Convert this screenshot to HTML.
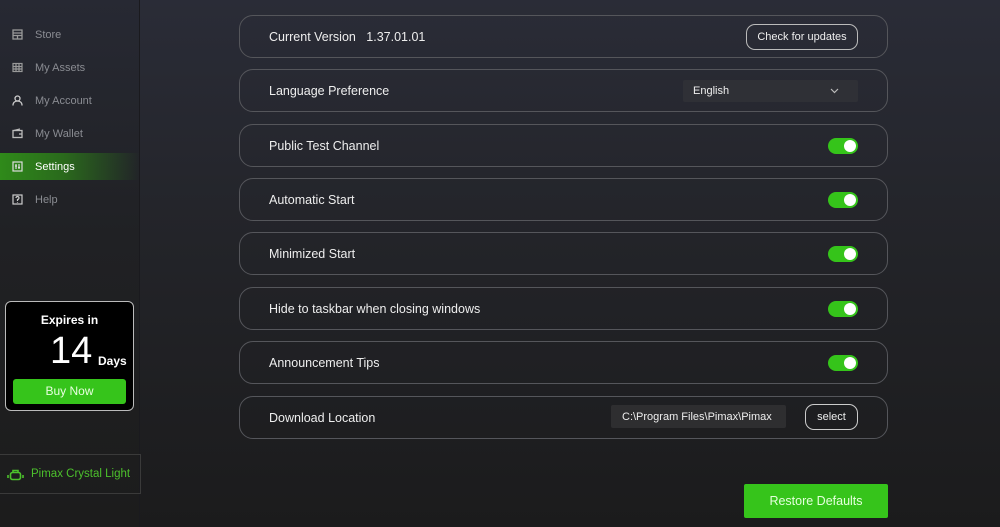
<!DOCTYPE html><html><head><style>
*{margin:0;padding:0;box-sizing:border-box}
body{width:1000px;height:527px;overflow:hidden;font-family:"Liberation Sans",sans-serif;background:linear-gradient(180deg,#2a2c37 0%,#232429 45%,#1b1b1c 100%);position:relative;color:#e8e8e8}
.side{position:absolute;left:0;top:0;width:140px;height:527px;background:linear-gradient(180deg,#272933 0%,#202124 45%,#1c1c1c 100%);border-right:1px solid #1a1a1e}
.nav{position:absolute;left:0;width:140px;height:27px;font-size:11px;color:#8a8c92;display:flex;align-items:center;padding-left:35px}
.nav svg{position:absolute;left:12px;top:8px}
.nav.act{background:linear-gradient(90deg,#2f8a1a 0%,#2a6a1c 45%,rgba(40,60,35,0) 100%);color:#fff}
.exp{position:absolute;left:5px;top:301px;width:129px;height:110px;background:#000;border:1px solid #bbb;border-radius:6px}
.row{position:absolute;left:239px;width:649px;height:43px;border:1px solid #55565b;border-radius:14px;font-size:12.5px;display:flex;align-items:center;padding-left:29px;color:#eee}
.tog{position:absolute;right:29px;top:13px;width:30px;height:16px;border-radius:8px;background:#35c41a}
.tog::after{content:"";position:absolute;right:2px;top:2px;width:12px;height:12px;border-radius:50%;background:#fff}
.btn{position:absolute;display:flex;align-items:center;justify-content:center;border:1.5px solid #bbb;border-radius:9px;font-size:11px}
.box{position:absolute;display:flex;align-items:center;font-size:11px}
</style></head><body>
<div class="side">
<div class="nav" style="top:21px"><svg width="11" height="11" viewBox="0 0 11 11" fill="none" stroke="#999" stroke-width="1.3"><rect x="1" y="1" width="9" height="9"/><path d="M1 4h9M1 6.5h9M5.5 6.5v3.5"/></svg>Store</div>
<div class="nav" style="top:54px"><svg width="11" height="11" viewBox="0 0 11 11" fill="none" stroke="#999" stroke-width="1.2"><rect x="1" y="1.5" width="9" height="8"/><path d="M1 4.5h9M1 7h9M4 1.5v8M7 1.5v8"/></svg>My Assets</div>
<div class="nav" style="top:87px"><svg width="11" height="11" viewBox="0 0 11 11" fill="none" stroke="#ccc" stroke-width="1.3"><circle cx="5.5" cy="3.5" r="2.5"/><path d="M1 10.5c0-3 2-4.5 4.5-4.5s4.5 1.5 4.5 4.5"/></svg>My Account</div>
<div class="nav" style="top:120px"><svg width="11" height="11" viewBox="0 0 11 11" fill="none" stroke="#bbb" stroke-width="1.3"><rect x="1" y="2.5" width="9" height="7"/><path d="M2 2.5l6-1.5M7 6h3"/></svg>My Wallet</div>
<div class="nav act" style="top:153px"><svg width="11" height="11" viewBox="0 0 11 11" fill="none" stroke="#ddd" stroke-width="1.2"><rect x="1" y="1" width="9" height="9"/><path d="M4 3v5M7 3v5M3 5h2M6 6.5h2"/></svg>Settings</div>
<div class="nav" style="top:186px"><svg width="11" height="11" viewBox="0 0 11 11" fill="none" stroke="#ccc" stroke-width="1.2"><rect x="1" y="1" width="9" height="9"/><path d="M4 4a1.5 1.5 0 1 1 1.5 1.5V7M5.5 8.3v.6"/></svg>Help</div>
<div class="exp">
<div style="position:absolute;top:11px;width:100%;text-align:center;font-size:12px;font-weight:bold;color:#fff">Expires in</div>
<div style="position:absolute;left:44px;top:28px;font-size:38px;color:#fff">14</div>
<div style="position:absolute;left:92px;top:52px;font-size:12px;font-weight:bold;color:#fff">Days</div>
<div style="position:absolute;left:7px;top:77px;width:113px;height:25px;background:#36c41b;border-radius:3px;color:#e8ffe0;font-size:12px;text-align:center;line-height:25px">Buy Now</div>
</div>
<div style="position:absolute;left:0;top:454px;width:141px;height:40px;border:1px solid #3a3a3a;border-left:none;display:flex;align-items:center;padding-left:31px;color:#4cc02c;font-size:11.5px">
<svg style="position:absolute;left:7px;top:14px" width="17" height="12" viewBox="0 0 17 12" fill="none" stroke="#4cc02c" stroke-width="1.6"><rect x="3.5" y="3.5" width="10" height="7" rx="2"/><path d="M6 3.5V1.5h5v2M1 6v3M16 6v3"/></svg>Pimax Crystal Light</div>
</div>
<div class="row" style="top:15px">Current Version&nbsp;&nbsp;&nbsp;1.37.01.01<div class="btn" style="left:506px;top:8px;width:112px;height:26px">Check for updates</div></div>
<div class="row" style="top:69px">Language Preference<div class="box" style="left:443px;top:10px;width:175px;height:22px;background:#2f3036;border-radius:2px;padding-left:10px">English<svg style="position:absolute;right:19px;top:8px" width="9" height="6" viewBox="0 0 9 6" fill="none" stroke="#bbb" stroke-width="1.2"><path d="M1 1l3.5 3.5L8 1"/></svg></div></div>
<div class="row" style="top:124px">Public Test Channel<div class="tog"></div></div>
<div class="row" style="top:178px">Automatic Start<div class="tog"></div></div>
<div class="row" style="top:232px">Minimized Start<div class="tog"></div></div>
<div class="row" style="top:287px">Hide to taskbar when closing windows<div class="tog"></div></div>
<div class="row" style="top:341px">Announcement Tips<div class="tog"></div></div>
<div class="row" style="top:396px">Download Location<div class="box" style="left:371px;top:8px;width:175px;height:23px;background:#2e2e30;border-radius:2px;padding-left:11px;overflow:hidden;white-space:nowrap">C:\Program Files\Pimax\Pimax</div><div class="btn" style="left:565px;top:7px;width:53px;height:26px;border-color:#ccc">select</div></div>
<div style="position:absolute;left:744px;top:484px;width:144px;height:34px;background:#36c41b;border-radius:2px;color:#e4ffdc;font-size:12.5px;text-align:center;line-height:34px">Restore Defaults</div>
</body></html>
